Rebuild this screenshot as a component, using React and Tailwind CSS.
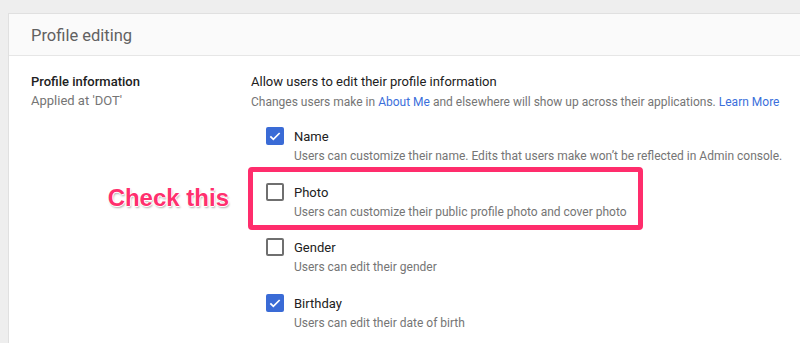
const options = [
  { label: 'Name', desc: 'Users can customize their name. Edits that users make won’t be reflected in Admin console.', checked: true },
  { label: 'Photo', desc: 'Users can customize their public profile photo and cover photo', checked: false, marked: true },
  { label: 'Gender', desc: 'Users can edit their gender', checked: false },
  { label: 'Birthday', desc: 'Users can edit their date of birth', checked: true },
];

function Checkbox({ checked }) {
  if (checked) {
    return (
      <div className="flex h-[18px] w-[18px] items-center justify-center rounded-[2px] bg-[#3a6bd6]">
        <svg viewBox="0 0 24 24" className="h-[16px] w-[16px]" fill="none" stroke="#fff" strokeWidth="2.6">
          <path d="M5 12.5l4.5 4.5L19 7.5" />
        </svg>
      </div>
    );
  }
  return <div className="h-[18px] w-[18px] rounded-[2px] border-2 border-[#6f6f6f]" />;
}

export default function App() {
  return (
    <div className="h-[343px] w-[800px] overflow-hidden bg-[#eeeeee] pt-[13px] pl-2 font-['Roboto',sans-serif]">
      <div className="h-[400px] w-[820px] border border-[#e0e0e0] bg-white">
        <div className="flex h-[42px] items-center border-b border-[#e6e6e6] bg-[#fafafa] pt-[4px] pl-[22px]">
          <h1 className="text-[16.5px] text-[#616161]">Profile editing</h1>
        </div>
        <div className="flex pt-[16px] pl-[22px]">
          <div className="w-[220px] shrink-0">
            <p className="text-[13px] leading-[20px] font-medium text-[#212121]">Profile information</p>
            <p className="mt-px text-[13px] leading-[16px] text-[#757575]">Applied at 'DOT'</p>
          </div>
          <div>
            <p className="text-[13px] leading-[20px] text-[#212121]">Allow users to edit their profile information</p>
            <p className="mt-px text-[12px] leading-[18px] text-[#757575]">
              Changes users make in <span className="text-[#3b6fdb]">About Me</span> and elsewhere will show up across their applications.{' '}
              <span className="text-[#3b6fdb]">Learn More</span>
            </p>
            <div className="mt-4 flex flex-col gap-[17.5px] pl-[15px]">
              {options.map((o) => (
                <div key={o.label} className="relative flex gap-[10px]">
                  <div className="shrink-0">
                    <Checkbox checked={o.checked} />
                  </div>
                  <div>
                    <p className="text-[13px] leading-[20px] text-[#212121]">{o.label}</p>
                    <p className="text-[12px] leading-[18px] text-[#757575]">{o.desc}</p>
                  </div>
                  {o.marked && (
                    <div className="absolute top-[-16px] left-[-18px] h-[63px] w-[395px] rounded-[4px] border-[5px] border-[#ff2d6c]">
                      <span className="absolute top-1/2 right-full mr-[24px] -translate-y-1/2 whitespace-nowrap font-['Liberation_Sans',sans-serif] text-[24px] leading-[28px] font-bold text-[#ff2f6e] [text-shadow:1px_0_0_#fff,-1px_0_0_#fff,0_1px_0_#fff,0_-1px_0_#fff,1px_2px_2px_rgba(0,0,0,0.3)]">
                        Check this
                      </span>
                    </div>
                  )}
                </div>
              ))}
            </div>
          </div>
        </div>
      </div>
    </div>
  );
}
